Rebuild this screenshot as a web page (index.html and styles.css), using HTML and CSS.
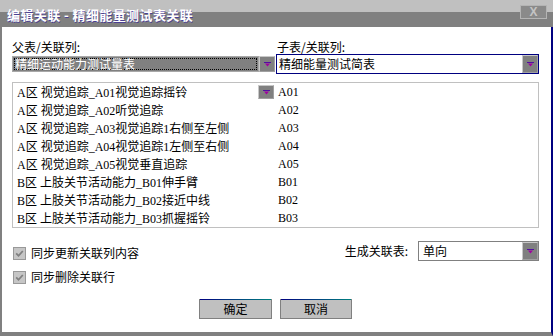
FILE: index.html
```html
<!DOCTYPE html>
<html lang="zh-CN">
<head>
<meta charset="utf-8">
<title>编辑关联</title>
<link rel="stylesheet" href="styles.css">
</head>
<body>
<div class="win">
  <div class="title">
    <span class="title-text">编辑关联 - 精细能量测试表关联</span>
    <span class="close">X</span>
  </div>
  <div class="body">
    <div class="fields">
      <div class="label">父表/关联列:</div>
      <div class="label r">子表/关联列:</div>
      <div class="pcombo">
        <div class="pfield"><span>精细运动能力测试量表</span></div>
        <span class="arrow"><svg width="7" height="5" viewBox="0 0 7 5"><rect x="0" y="0" width="7" height="1" fill="#5010a0"/><path d="M1 1.5h5L3.5 4.5z" fill="#a000a0"/></svg></span>
      </div>
      <div class="ccombo">
        <span class="txt">精细能量测试简表</span>
        <span class="arrow flat"><svg width="7" height="5" viewBox="0 0 7 5"><rect x="0" y="0" width="7" height="1" fill="#5010a0"/><path d="M1 1.5h5L3.5 4.5z" fill="#a000a0"/></svg></span>
      </div>
    </div>

    <div class="list">
      <div class="row"><div class="c1"><span>A区 视觉追踪_A01视觉追踪摇铃</span><span class="arrow small"><svg width="7" height="5" viewBox="0 0 7 5"><rect x="0" y="0" width="7" height="1" fill="#5010a0"/><path d="M1 1.5h5L3.5 4.5z" fill="#a000a0"/></svg></span></div><div class="c2">A01</div></div>
      <div class="row"><div class="c1"><span>A区 视觉追踪_A02听觉追踪</span></div><div class="c2">A02</div></div>
      <div class="row"><div class="c1"><span>A区 视觉追踪_A03视觉追踪1右侧至左侧</span></div><div class="c2">A03</div></div>
      <div class="row"><div class="c1"><span>A区 视觉追踪_A04视觉追踪1左侧至右侧</span></div><div class="c2">A04</div></div>
      <div class="row"><div class="c1"><span>A区 视觉追踪_A05视觉垂直追踪</span></div><div class="c2">A05</div></div>
      <div class="row"><div class="c1"><span>B区 上肢关节活动能力_B01伸手臂</span></div><div class="c2">B01</div></div>
      <div class="row"><div class="c1"><span>B区 上肢关节活动能力_B02接近中线</span></div><div class="c2">B02</div></div>
      <div class="row"><div class="c1"><span>B区 上肢关节活动能力_B03抓握摇铃</span></div><div class="c2">B03</div></div>
    </div>

    <div class="opts">
      <div class="checks">
        <div class="chk"><span class="box"><svg width="9" height="9" viewBox="0 0 9 9"><path d="M1.2 4.4l2.3 2.4L7.8 2" fill="none" stroke="#808080" stroke-width="1.8"/></svg></span><span>同步更新关联列内容</span></div>
        <div class="chk"><span class="box"><svg width="9" height="9" viewBox="0 0 9 9"><path d="M1.2 4.4l2.3 2.4L7.8 2" fill="none" stroke="#808080" stroke-width="1.8"/></svg></span><span>同步删除关联行</span></div>
      </div>
      <div class="gen">
        <span class="glabel">生成关联表:</span>
        <div class="gcombo">
          <span class="txt">单向</span>
          <span class="arrow"><svg width="7" height="5" viewBox="0 0 7 5"><rect x="0" y="0" width="7" height="1" fill="#5010a0"/><path d="M1 1.5h5L3.5 4.5z" fill="#a000a0"/></svg></span>
        </div>
      </div>
    </div>

    <div class="buttons">
      <div class="btn ok">确定</div>
      <div class="btn cancel">取消</div>
    </div>
  </div>
</div>
</body>
</html>
```
FILE: styles.css
```css
html, body {
  margin: 0;
  padding: 0;
  background: #ffffff;
}
body {
  font-family: "Noto Sans CJK SC", "Liberation Sans", sans-serif;
  font-size: 12px;
  color: #000;
}
.win {
  width: 553px;
  height: 336px;
  display: flex;
  flex-direction: column;
}
.title {
  height: 27px;
  flex: none;
  box-sizing: border-box;
  display: flex;
  align-items: flex-start;
  padding-left: 7px;
  background: linear-gradient(#c0c0c0 0, #c0c0c0 12px, #808080 12px, #808080 27px);
}
.title-text {
  margin-top: 8px;
  line-height: 14px;
  font-size: 13px;
  font-weight: bold;
  letter-spacing: 0.4px;
  color: #fff;
  text-shadow: 0.6px 0.6px 0 rgba(40, 20, 160, 0.6);
}
.close {
  margin-left: auto;
  margin-top: 5px;
  margin-right: 6px;
  width: 27px;
  height: 14px;
  box-sizing: border-box;
  border: 1px solid #b4b4b4;
  background: #8a8a8a;
  color: #c4c4c4;
  font: bold 12px/12px "Liberation Sans", sans-serif;
  text-align: center;
}
.body {
  flex: 1;
  border-left: 2px solid #808080;
  border-right: 2px solid #000080;
  border-bottom: 4px solid #808080;
  padding: 13px 12px 0 10px;
  display: flex;
  flex-direction: column;
}
.fields {
  display: grid;
  grid-template-columns: 263px 1fr;
  grid-template-rows: 14px 20px;
  column-gap: 1px;
  align-items: center;
}
.label {
  line-height: 14px;
}
.label.r {
  padding-left: 1px;
}
.pcombo {
  display: flex;
  height: 16px;
}
.pfield {
  flex: 1;
  box-sizing: border-box;
  border: 1px solid #a8a8a8;
  background: #808080;
  padding: 1px;
}
.pfield span {
  display: block;
  height: 100%;
  box-sizing: border-box;
  border: 1px dotted #000;
  color: #fff;
  line-height: 10px;
  white-space: nowrap;
}
.arrow {
  width: 16px;
  flex: none;
  box-sizing: border-box;
  background: #808080;
  border: 1px solid #c8c8c8;
  border-right-color: #a0a0a0;
  border-bottom-color: #a0a0a0;
  display: flex;
  align-items: center;
  justify-content: center;
}
.arrow.small {
  height: 14px;
}
.ccombo {
  display: flex;
  height: 20px;
  box-sizing: border-box;
  border: 1px solid #000080;
  background: #fff;
}
.ccombo .txt {
  flex: 1;
  padding-left: 2px;
  line-height: 18px;
}
.list {
  margin-top: 8px;
  border: 1px solid #c0c0c0;
}
.row {
  display: flex;
  height: 18px;
  align-items: center;
  font-family: "Liberation Serif", "Noto Sans CJK SC", serif;
  font-size: 12px;
}
.c1 {
  width: 265px;
  box-sizing: border-box;
  padding: 0 4px;
  display: flex;
  align-items: center;
  justify-content: space-between;
  white-space: nowrap;
}
.c2 {
  flex: 1;
}
.opts {
  margin-top: 13px;
  display: flex;
  justify-content: space-between;
  align-items: flex-start;
}
.checks {
  display: flex;
  flex-direction: column;
  gap: 6px;
  padding-top: 3px;
}
.chk {
  display: flex;
  align-items: center;
  gap: 5px;
  height: 18px;
  padding-left: 1px;
  line-height: 18px;
}
.box {
  width: 13px;
  height: 13px;
  box-sizing: border-box;
  border: 1px solid #999;
  background: #c6c6c6;
  display: flex;
  align-items: center;
  justify-content: center;
}
.gen {
  display: flex;
  align-items: center;
  gap: 10px;
}
.glabel {
  line-height: 20px;
}
.gcombo {
  width: 121px;
  height: 20px;
  box-sizing: border-box;
  border: 1px solid #808080;
  display: flex;
  background: #fff;
}
.gcombo .txt {
  flex: 1;
  padding-left: 4px;
  line-height: 18px;
}
.buttons {
  margin-top: 13px;
  display: flex;
  justify-content: center;
  gap: 8px;
}
.btn {
  width: 73px;
  height: 20px;
  box-sizing: border-box;
  border: 1px solid #808080;
  border-top: none;
  padding-top: 1px;
  background: linear-gradient(90deg, #000080, #008080) top left / 100% 1px no-repeat, #c0c0c0;
  text-align: center;
  line-height: 18px;
}
.btn.cancel {
  width: 72px;
}
```
